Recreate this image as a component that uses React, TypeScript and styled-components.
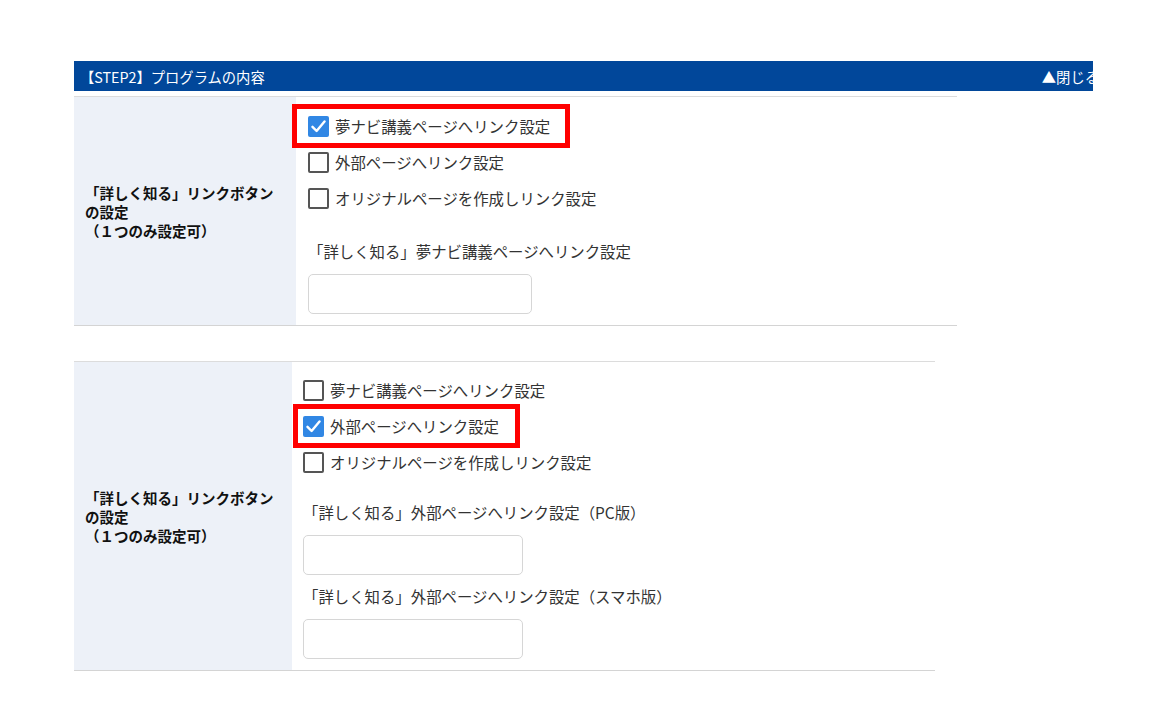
import React from "react";
import styled, { createGlobalStyle } from "styled-components";

const GlobalStyle = createGlobalStyle`
  body {
    margin: 0;
    background: #fff;
    font-family: "Noto Sans CJK JP", "Noto Sans", sans-serif;
  }
`;

const Page = styled.div`
  padding: 61px 0 40px 74px;
`;

const Header = styled.div`
  display: flex;
  align-items: center;
  justify-content: space-between;
  width: 1019px;
  height: 30px;
  overflow: hidden;
  background: #01479a;
  color: #fff;
  font-size: 14.3px;
  padding-left: 6px;
  box-sizing: border-box;
  margin-bottom: 5px;
`;

const Close = styled.span`
  white-space: nowrap;
  margin-right: -6px;
`;

const Table = styled.div<{ $width: number; $gap?: number }>`
  display: flex;
  width: ${(p) => p.$width}px;
  border-top: 1px solid #dcdcdc;
  border-bottom: 1px solid #d4d4d4;
  margin-bottom: ${(p) => p.$gap ?? 0}px;
`;

const Head = styled.div<{ $width: number }>`
  display: flex;
  align-items: center;
  width: ${(p) => p.$width}px;
  flex-shrink: 0;
  background: #edf1f8;
  padding-left: 11px;
  box-sizing: border-box;
  font-size: 14.5px;
  font-weight: bold;
  line-height: 19px;
  color: #111;
`;

const Body = styled.div<{ $pad: number; $top: number }>`
  flex: 1;
  display: flex;
  flex-direction: column;
  align-items: flex-start;
  padding: ${(p) => p.$top}px 0 11px ${(p) => p.$pad}px;
  color: #333;
  font-size: 15.4px;
`;

const Option = styled.label`
  display: flex;
  align-items: center;
  gap: 6px;
  height: 36px;
  white-space: nowrap;
`;

const Marked = styled.div<{ $left: number; $width: number }>`
  display: flex;
  align-items: center;
  box-sizing: border-box;
  height: 44px;
  width: ${(p) => p.$width}px;
  margin: -4px 0 -4px -${(p) => p.$left}px;
  padding-left: ${(p) => p.$left - 5}px;
  border: 5px solid #ff0000;
`;

const Box = styled.span<{ $checked?: boolean }>`
  display: inline-flex;
  align-items: center;
  justify-content: center;
  width: 21px;
  height: 21px;
  box-sizing: border-box;
  border-radius: 2px;
  border: ${(p) => (p.$checked ? "none" : "2px solid #555")};
  background: ${(p) => (p.$checked ? "#3187e4" : "#fff")};
`;

const FieldLabel = styled.div<{ $top: number }>`
  margin-top: ${(p) => p.$top}px;
  line-height: 24px;
  white-space: nowrap;
`;

const Input = styled.div<{ $width: number }>`
  margin-top: 11px;
  width: ${(p) => p.$width}px;
  height: 40px;
  box-sizing: border-box;
  border: 1px solid #d6d6d6;
  border-radius: 5px;
  background: #fff;
`;

const Check = ({ checked }: { checked?: boolean }) => (
  <Box $checked={checked}>
    {checked ? (
      <svg width="15" height="13" viewBox="0 0 15 13">
        <path d="M1.5 6.8 L5.6 11 L13.5 1.5" fill="none" stroke="#fff" strokeWidth="2.4" strokeLinecap="round" strokeLinejoin="round" />
      </svg>
    ) : null}
  </Box>
);

const HeadText = () => (
  <div>
    「詳しく知る」リンクボタン
    <br />
    の設定
    <br />
    （１つのみ設定可）
  </div>
);

const options = ["夢ナビ講義ページへリンク設定", "外部ページへリンク設定", "オリジナルページを作成しリンク設定"];

const App = () => {
  return (
    <Page>
      <GlobalStyle />
      <Header>
        <span>【STEP2】プログラムの内容</span>
        <Close>▲閉じる</Close>
      </Header>

      <Table $width={883} $gap={35}>
        <Head $width={222}>
          <HeadText />
        </Head>
        <Body $pad={12} $top={11}>
          <Marked $left={16} $width={278}>
            <Option>
              <Check checked />
              {options[0]}
            </Option>
          </Marked>
          <Option>
            <Check />
            {options[1]}
          </Option>
          <Option>
            <Check />
            {options[2]}
          </Option>
          <FieldLabel $top={23}>「詳しく知る」夢ナビ講義ページへリンク設定</FieldLabel>
          <Input $width={224} />
        </Body>
      </Table>

      <Table $width={861}>
        <Head $width={218}>
          <HeadText />
        </Head>
        <Body $pad={11} $top={10}>
          <Option>
            <Check />
            {options[0]}
          </Option>
          <Marked $left={10} $width={227}>
            <Option>
              <Check checked />
              {options[1]}
            </Option>
          </Marked>
          <Option>
            <Check />
            {options[2]}
          </Option>
          <FieldLabel $top={20}>「詳しく知る」外部ページへリンク設定（PC版）</FieldLabel>
          <Input $width={220} />
          <FieldLabel $top={9}>「詳しく知る」外部ページへリンク設定（スマホ版）</FieldLabel>
          <Input $width={220} />
        </Body>
      </Table>
    </Page>
  );
};

export default App;
